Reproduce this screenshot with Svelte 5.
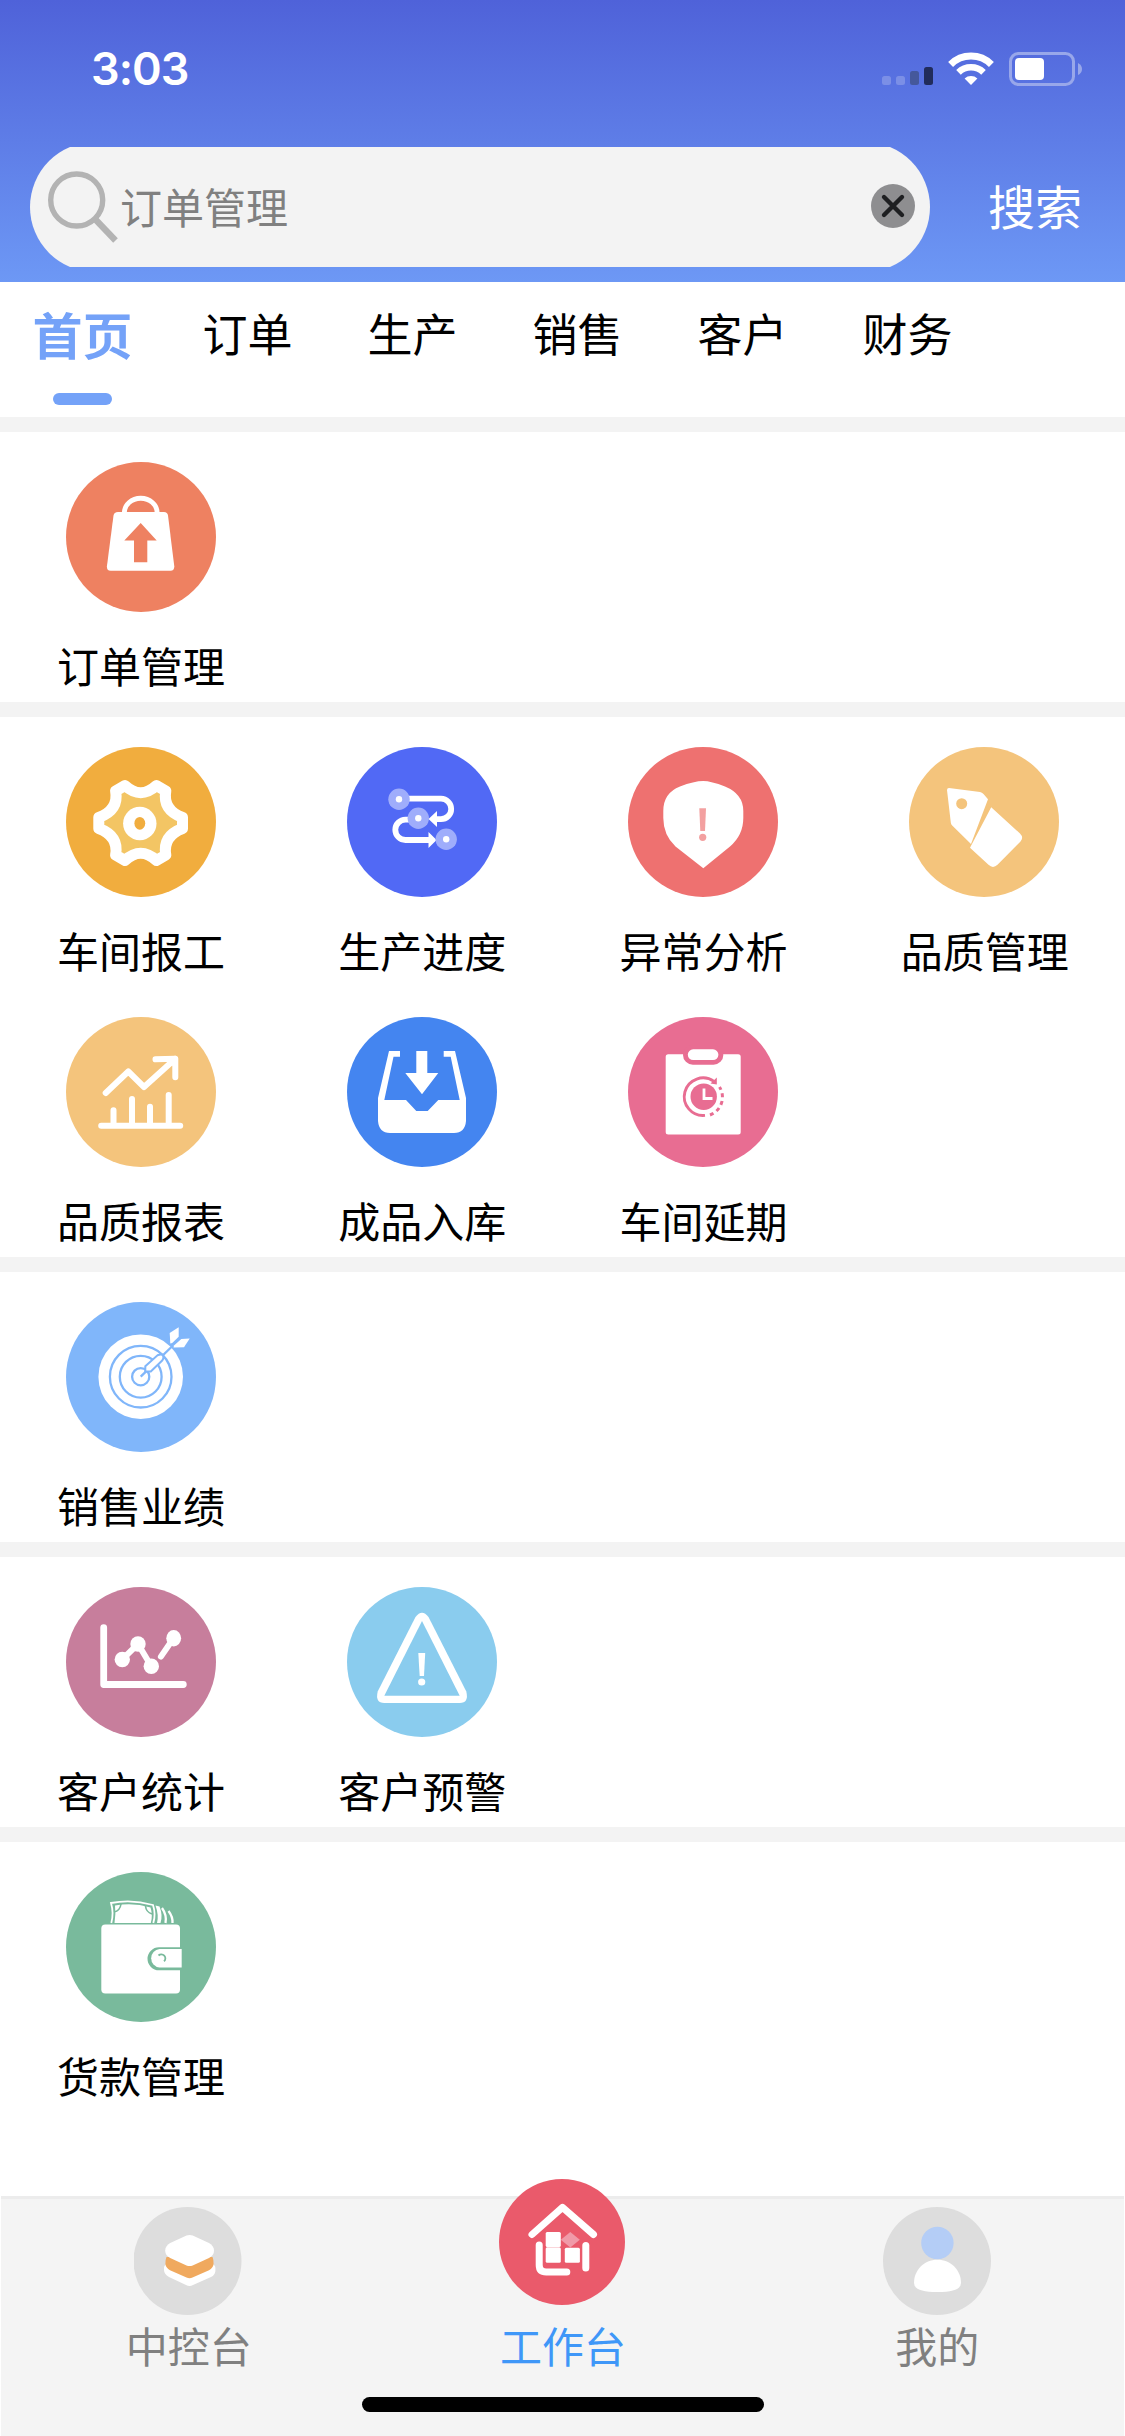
<script lang="ts">
  type Item = { icon: string; label: string; color: string };

  const tabs = ["首页", "订单", "生产", "销售", "客户", "财务"];

  const sections: Item[][] = [
    [{ icon: "bag", label: "订单管理", color: "#ee8161" }],
    [
      { icon: "gear", label: "车间报工", color: "#f1ad3e" },
      { icon: "flow", label: "生产进度", color: "#5169f5" },
      { icon: "shield", label: "异常分析", color: "#ee7170" },
      { icon: "tag", label: "品质管理", color: "#f4c47c" },
      { icon: "chart", label: "品质报表", color: "#f4c47c" },
      { icon: "inbox", label: "成品入库", color: "#4485f0" },
      { icon: "delay", label: "车间延期", color: "#e86d92" },
    ],
    [{ icon: "target", label: "销售业绩", color: "#80b6fa" }],
    [
      { icon: "stats", label: "客户统计", color: "#c77e9c" },
      { icon: "warning", label: "客户预警", color: "#8accee" },
    ],
    [{ icon: "wallet", label: "货款管理", color: "#79ba9c" }],
  ];

  let activeTab = $state(0);
  let keyword = $state("订单管理");
</script>

<div class="page">
  <header>
    <div class="status">
      <span class="time">3:03</span>
      <svg class="indicators" width="202" height="36" viewBox="881 51 202 36">
        <rect x="882" y="76" width="9" height="9" rx="2.5" fill="#7b8fe6" />
        <rect x="896" y="76" width="9" height="9" rx="2.5" fill="#7b8fe6" />
        <rect x="910" y="71" width="9" height="14" rx="2.5" fill="#45589b" />
        <rect x="924" y="67" width="9" height="18" rx="2.5" fill="#212c5b" />
        <g fill="none" stroke="#fff" stroke-width="7">
          <path d="M950.6 64.4 A29 29 0 0 1 991.4 64.4" />
          <path d="M958.5 72.3 A18 18 0 0 1 983.5 72.3" stroke-width="6.6" />
        </g>
        <path d="M971 85 L964.6 78.4 A9.5 9.5 0 0 1 977.4 78.4 Z" fill="#fff" />
        <rect x="1010.5" y="53.5" width="63" height="31" rx="8" fill="none" stroke="#98a7ea" stroke-width="3" />
        <rect x="1015" y="58" width="29" height="22" rx="4" fill="#fff" />
        <path d="M1078 63 Q1082 65 1082 69 Q1082 73 1078 75 Z" fill="#98a7ea" />
      </svg>
    </div>
    <div class="search-row">
      <div class="search">
        <svg width="74" height="74" viewBox="0 0 74 74">
          <g fill="none" stroke="#b3b3b3">
            <circle cx="30.7" cy="30" r="26" stroke-width="5.4" />
            <path d="M49 49 L69.5 70.5" stroke-width="6.4" />
          </g>
        </svg>
        <span class="keyword">{keyword}</span>
        <button class="clear" aria-label="清除" onclick={() => (keyword = "")}>
          <svg width="44" height="44" viewBox="0 0 44 44">
            <circle cx="22" cy="22" r="22" fill="#8e8e90" />
            <path d="M13 13 L31 31 M31 13 L13 31" stroke="#1e1f21" stroke-width="4.4" stroke-linecap="round" />
          </svg>
        </button>
      </div>
      <span class="submit">搜索</span>
    </div>
  </header>

  <nav class="tabs">
    {#each tabs as tab, i}
      <button class="tab" class:active={i === activeTab} onclick={() => (activeTab = i)}>
        {tab}
        {#if i === activeTab}<i class="underline"></i>{/if}
      </button>
    {/each}
  </nav>

  <main>
    {#each sections as items}
      <section>
        {#each items as item}
          <div class="item">
            <svg width="150" height="150" viewBox="0 0 150 150" fill="#fff">
              <circle cx="75" cy="75" r="75" fill={item.color} />
              {@render icon(item.icon, item.color)}
            </svg>
            <span>{item.label}</span>
          </div>
        {/each}
      </section>
    {/each}
  </main>

  <footer>
    <div class="nav-item">
      <svg width="108" height="108" viewBox="0 0 108 108">
        <circle cx="53.5" cy="54" r="54" fill="#ddd" />
        <path
          d="M30 61 Q30 58 34 56 L77 56 Q81.4 58 81.4 61 V64 Q81 68 77 70 L59 78 Q55.6 80 52 78 L35 70 Q30 67 30 63 Z"
          fill="#fff"
        />
        <path
          d="M32.5 50 H78.5 Q79.8 53 79.6 57 Q79 61 75 63.3 L58.5 70.5 Q55.6 72 52.5 70.5 L36 63.3 Q32 61 31.4 57 Q31.2 53 32.5 50 Z"
          fill="#f0a95e"
        />
        <path
          d="M52.5 28.6 Q55.6 27.4 58.7 28.6 L75 36 Q80 39 80 43.5 Q80 48.5 75 51 L58.7 58.4 Q55.6 59.6 52.5 58.4 L36.2 51 Q31.2 48.5 31.2 43.5 Q31.2 39 36.2 36 Z"
          fill="#fff"
        />
      </svg>
      <span>中控台</span>
    </div>
    <div class="nav-item current">
      <svg width="126" height="126" viewBox="0 0 126 126">
        <circle cx="63" cy="63" r="63" fill="#ea5a6b" />
        <g fill="none" stroke="#fff" stroke-width="7" stroke-linecap="round" stroke-linejoin="round">
          <path d="M33 55.5 L63.5 28.3 L94.5 55.5" />
          <path d="M40.2 66 V86 Q40.2 93 47.2 93 H67.8" />
          <path d="M86.8 66.5 V89" />
        </g>
        <path d="M71.3 53 L80.8 60.7 L71.3 68.4 L61.8 60.7 Z" fill="#f09aa8" />
        <rect x="46.7" y="53" width="15.1" height="15" rx="1.5" fill="#fff" />
        <rect x="46.7" y="68.3" width="15.1" height="15.4" rx="1.5" fill="#fff" />
        <rect x="65.8" y="68.7" width="15.1" height="15" rx="1.5" fill="#fff" />
      </svg>
      <span>工作台</span>
    </div>
    <div class="nav-item">
      <svg width="108" height="108" viewBox="0 0 108 108">
        <circle cx="54" cy="54" r="54" fill="#ddd" />
        <circle cx="54.4" cy="36" r="16.2" fill="#b4cdf6" />
        <path d="M54.4 52.7 C68 52.7 78 63 78 76 Q78 85 54.4 85 Q31 85 31 76 C31 63 41 52.7 54.4 52.7 Z" fill="#fff" />
      </svg>
      <span>我的</span>
    </div>
    <div class="home-bar"></div>
  </footer>
</div>

{#snippet icon(name: string, color: string)}
  {#if name === "bag"}
    <path d="M58.3 52 V51 A16.4 14.7 0 0 1 91.2 51 V52" fill="none" stroke="#fff" stroke-width="4.8" />
    <path d="M52 50 H98 Q101.5 50 102 53.5 L108.3 104.5 Q108.3 108.7 104.5 108.7 H44.7 Q40.7 108.7 40.9 104.5 L47.5 53.5 Q48 50 52 50 Z" />
    <path d="M74.7 61 L90.7 78.5 H81.3 V100.3 H68 V78.5 H58.3 Z" fill={color} />
  {:else if name === "gear"}
    <path
      d="M59 38.5 Q74.7 52.9 90.4 38.5 L99.8 44 Q96.5 63 116.5 70.5 V81.5 Q96.5 89 99.8 108 L90.4 113.5 Q74.7 99.1 59 113.5 L49.6 108 Q53 89 32.8 81.5 V70.5 Q53 63 49.6 44 Z"
      fill="#f3c564"
      stroke="#fff"
      stroke-width="11"
      stroke-linejoin="round"
    />
    <circle cx="73.8" cy="76.5" r="16.7" />
    <ellipse cx="73.8" cy="76.3" rx="5.4" ry="6.4" fill={color} />
  {:else if name === "flow"}
    <g fill="none" stroke="#fff" stroke-width="5.8">
      <path d="M61 51.7 H94 A10.2 10.2 0 0 1 94 72.1 H89" />
      <path d="M62 72.6 H58.5 A10.2 10.2 0 0 0 58.5 93 H83" />
    </g>
    <path d="M81.5 72 L90 64 V80 Z M89.6 93 L81.5 85 V101 Z" />
    <g fill="#9fadfb">
      <circle cx="52" cy="52.2" r="10.7" />
      <circle cx="71.3" cy="71.3" r="10.7" />
      <circle cx="99.2" cy="92.3" r="10.7" />
    </g>
    <circle cx="52" cy="52.2" r="3.2" />
    <circle cx="71.3" cy="71.3" r="3.2" />
    <circle cx="99.2" cy="92.3" r="3.2" />
  {:else if name === "shield"}
    <path d="M75.3 34 Q83 34 97 39.5 Q115.3 47 115.3 64 V71 Q115.3 88 102 99.5 L75.3 121.3 L47.5 99.5 Q35.3 88 35.3 71 V64 Q35.3 46 52 39.5 Q66 34 75.3 34 Z" />
    <path d="M71.3 61.3 H78 L77 84 H72.3 Z" fill="#f3a0a0" />
    <circle cx="74.7" cy="90.3" r="3.6" fill="#f3a0a0" />
  {:else if name === "tag"}
    <path d="M40 41 L71 45 Q73 45.3 74.5 47 L79 52.3 L62 97 L43.2 78.5 Q42 77.5 41.8 75.5 L38 43 Q38 41 40 41 Z" />
    <circle cx="52.7" cy="56.7" r="5.5" fill={color} />
    <path d="M82.2 60.3 L111 86.5 Q115 90.5 111.5 94.5 L88.5 117.8 Q84 122 79.5 117.8 L61 100.8 Z" />
  {:else if name === "chart"}
    <g fill="none" stroke="#fff" stroke-width="6" stroke-linecap="round" stroke-linejoin="round">
      <path d="M35.2 108.7 H114.2" />
      <path d="M47.5 107 V93.3 M66 107 V82 M84 107 V89.7 M102.7 107 V78" />
      <path d="M39.7 76 L62.3 54.5 L78 70 L109 42 M89.5 42.3 L109.3 41.7 V60.3" />
    </g>
  {:else if name === "inbox"}
    <path
      d="M42 34 H53 V39.7 H46.5 L37.3 83 H59 L69.3 94 H80.7 L91.3 83 H112.7 L103.7 39.7 H96.7 V34 H108 L119 81 V104 Q118 116 107 116 H43 Q32 116 31 104 V81 Z"
    />
    <path d="M69.3 34 H80.3 V56 H91.3 L75 77.3 L58.3 56 H69.3 Z" />
  {:else if name === "delay"}
    <rect x="37.7" y="37.2" width="75" height="80.3" rx="2.5" />
    <rect x="55" y="28" width="40.3" height="19.7" rx="9.8" fill={color} />
    <rect x="59.8" y="32.3" width="30.6" height="10.8" rx="5.4" />
    <circle cx="75.7" cy="79.7" r="13.2" fill={color} />
    <path d="M76 71.5 V81.5 H84.5" fill="none" stroke="#fff" stroke-width="2.8" />
    <path d="M77 98.4 A18.8 18.8 0 1 1 86 64.4" fill="none" stroke={color} stroke-width="2.9" />
    <path d="M82 98 A19 19 0 0 0 91.5 70" fill="none" stroke={color} stroke-width="3" stroke-dasharray="4 3.6" />
    <path d="M88.8 60.5 V67.5 L82.5 66.6 Z" fill={color} />
  {:else if name === "target"}
    <circle cx="74.7" cy="74.7" r="42.3" />
    <g fill="none" stroke={color} stroke-width="2.3">
      <circle cx="74.7" cy="74.7" r="30.8" />
      <circle cx="74.7" cy="74.7" r="20.9" />
      <circle cx="74.7" cy="74.7" r="8.6" />
      <path d="M74.7 74.7 L107 43.5" />
    </g>
    <path d="M79.3 69.5 V64.3 L91.5 53.3 Q95.7 51.7 97 53.5 Q98.3 56 96.2 58.5 L84.8 69.5 Z" stroke={color} stroke-width="2" />
    <path d="M112.7 25.3 L103.7 31 L104.3 41.5 L106.2 41 L112.7 34.7 Z" />
    <path d="M123.7 36.5 L115.3 37 L108 43.5 L107.5 45.5 L118 45.3 Z" />
  {:else if name === "stats"}
    <g fill="none" stroke="#fff" stroke-linecap="round" stroke-linejoin="round">
      <path d="M37.7 40.6 V97.5 H117.3" stroke-width="6.8" />
      <path d="M56.3 72.3 L72 57 L85.3 79.3 M94.9 69.6 L107.7 51" stroke-width="6" />
    </g>
    <circle cx="56.3" cy="72.5" r="7.7" />
    <circle cx="72" cy="57" r="7.7" />
    <circle cx="85.3" cy="79.3" r="7.7" />
    <ellipse cx="107.7" cy="51.2" rx="7.4" ry="8.2" />
  {:else if name === "warning"}
    <path d="M68.5 30 Q75 21.5 81.5 30 L119.3 104.5 Q122 116 112.7 116 H37.3 Q28 116 30.7 104.5 Z" />
    <path d="M75 34 L112.7 108.7 H37.3 Z" fill={color} />
    <path d="M71.3 66 H78.2 L77 89 H72.7 Z" />
    <circle cx="74.7" cy="95" r="3.6" />
  {:else if name === "wallet"}
    <path d="M45.3 51 Q48 41 45 31 Q66 27 87 33 Q90 42 87.3 51" fill="none" stroke="#fff" stroke-width="1.8" />
    <path d="M48.5 51 Q50 42 49 33.5 Q67 30 84.5 35.5 Q87 43 84.8 51 Z" />
    <path d="M48 40 Q54 39 55 32 M79.5 34 Q80 40 86 42" fill="none" stroke={color} stroke-width="1.6" />
    <path d="M89.5 33.5 L93.5 34.5 Q97 43 94.5 51 H91 Q93 43 89.5 33.5 Z" />
    <path d="M96 36 Q101 43 99.5 51 M102.5 39 Q107 45 106.5 51" fill="none" stroke="#fff" stroke-width="2.3" />
    <rect x="35.3" y="52.5" width="78.7" height="69" rx="4" />
    <path d="M115.7 75.3 H93 A11.5 11.5 0 0 0 93 98.3 H115.7 Z" fill={color} />
    <path d="M115.7 77 H93.5 A9.3 9.3 0 0 0 93.5 95.5 H115.7 Z" />
    <path d="M92.5 83.5 A4 4 0 1 1 98 89.3" fill="none" stroke={color} stroke-width="1.8" />
  {/if}
{/snippet}

<style>
  :global(body) {
    margin: 0;
    background: #fff;
  }

  .page {
    display: flex;
    flex-direction: column;
    width: 1125px;
    height: 2436px;
    overflow: hidden;
    font-family: "Noto Sans CJK SC", "Liberation Sans", sans-serif;
    font-size: 42px;
    line-height: 60px;
    color: #000;
    background: #fff;
  }

  svg {
    display: block;
    flex: none;
  }

  button {
    padding: 0;
    border: 0;
    background: none;
    color: inherit;
    font: inherit;
  }

  header {
    height: 282px;
    background: linear-gradient(#4f62d9, #6d98f5);
  }

  .status {
    display: flex;
    justify-content: space-between;
    align-items: center;
    height: 58px;
    padding: 40px 42px 0 91px;
  }

  .time {
    font-family: Inter, sans-serif;
    font-size: 45px;
    font-weight: 600;
    letter-spacing: -1px;
    color: #fff;
  }

  .search-row {
    display: flex;
    align-items: center;
    margin-top: 44px;
  }

  .search {
    display: flex;
    align-items: center;
    box-sizing: border-box;
    width: 900px;
    height: 130px;
    margin-left: 30px;
    padding: 0 15px 0 16px;
    border-radius: 65px;
    clip-path: inset(5px 0);
    background: #f3f3f3;
  }

  .keyword {
    flex: 1;
    padding-bottom: 3px;
    color: #808080;
  }

  .clear {
    padding-bottom: 3px;
  }

  .submit {
    margin-left: 58px;
    padding-bottom: 4px;
    font-size: 47px;
    color: #fff;
  }

  .tabs {
    display: flex;
    height: 135px;
    border-bottom: 15px solid #f3f3f3;
  }

  .tab {
    display: flex;
    flex-direction: column;
    align-items: center;
    width: 165px;
    padding-top: 21px;
    font-size: 45px;
    line-height: 60px;
  }

  .tab.active {
    font-size: 50px;
    font-weight: 700;
    color: #74a2f8;
  }

  .underline {
    width: 59px;
    height: 12px;
    margin-top: 30px;
    border-radius: 6px;
    background: #74a2f8;
  }

  main {
    flex: 1;
  }

  section {
    display: grid;
    grid-template-columns: repeat(4, 1fr);
    border-bottom: 15px solid #f3f3f3;
  }

  section:last-child {
    border-bottom: 0;
  }

  .item {
    display: flex;
    flex-direction: column;
    align-items: center;
    gap: 23px;
    box-sizing: border-box;
    height: 270px;
    padding-top: 30px;
  }

  .item span {
    padding-left: 1px;
  }

  footer {
    position: relative;
    display: flex;
    box-sizing: border-box;
    height: 240px;
    margin: 0 1px;
    border-top: 3px solid #ececec;
    background: #f4f4f4;
  }

  .nav-item {
    display: flex;
    flex: 1;
    flex-direction: column;
    align-items: center;
    padding-top: 8px;
    color: #808080;
  }

  .nav-item span {
    padding-left: 1px;
  }

  .nav-item.current {
    gap: 10px;
    margin-top: -28px;
    color: #3f97f8;
  }

  .home-bar {
    position: absolute;
    bottom: 24px;
    left: 361px;
    width: 402px;
    height: 15px;
    border-radius: 8px;
    background: #000;
  }
</style>
